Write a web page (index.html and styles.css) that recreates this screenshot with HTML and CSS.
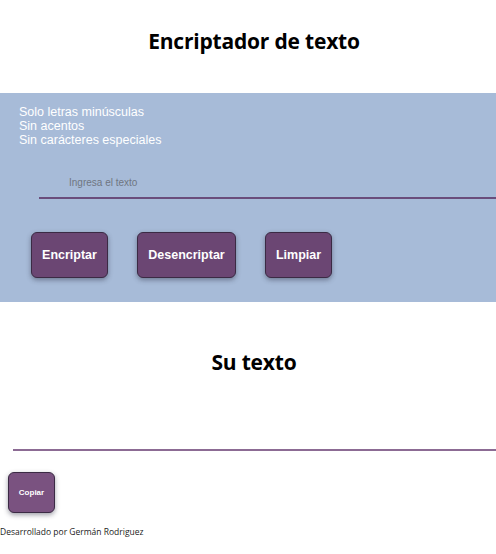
FILE: index.html
```html
<!DOCTYPE html>
<html lang="es">
<head>
<meta charset="utf-8">
<title>Encriptador de texto</title>
<link rel="stylesheet" href="styles.css">
</head>
<body>
<header class="top">
  <h1 class="title">Encriptador de texto</h1>
</header>
<section class="panel">
  <div class="rules">
    <div>Solo letras minúsculas</div>
    <div>Sin acentos</div>
    <div>Sin carácteres especiales</div>
  </div>
  <div class="field">
    <input class="input" type="text" placeholder="Ingresa el texto">
  </div>
  <div class="actions">
    <button class="btn">Encriptar</button>
    <button class="btn">Desencriptar</button>
    <button class="btn">Limpiar</button>
  </div>
</section>
<section class="result">
  <h2 class="subtitle">Su texto</h2>
  <div class="output"></div>
  <button class="btn-copy">Copiar</button>
</section>
<footer class="foot">Desarrollado por Germán Rodriguez</footer>
</body>
</html>
```
FILE: styles.css
```css
* { box-sizing: border-box; }
html, body { margin: 0; padding: 0; }
body {
  width: 496px;
  background: #ffffff;
  font-family: "Liberation Sans", Arial, sans-serif;
  overflow: hidden;
}
.top {
  height: 93px;
  display: flex;
  align-items: center;
  justify-content: center;
  padding-left: 12px;
  padding-bottom: 12px;
}
.title {
  margin: 0;
  font-family: "Open Sans", sans-serif;
  font-weight: 700;
  font-size: 21px;
  color: #000;
  letter-spacing: -0.2px;
}
.panel {
  background: #a7bbd8;
  height: 209px;
  padding-top: 12px;
}
.rules {
  padding-left: 19px;
  color: #ffffff;
  font-size: 12.5px;
  line-height: 14px;
}
.field {
  margin-top: 26px;
  padding-left: 39px;
}
.input {
  display: block;
  width: 100%;
  height: 26px;
  border: none;
  border-bottom: 2px solid #6a4d7c;
  background: transparent;
  padding: 0 0 5px 30px;
  font-family: "Liberation Sans", Arial, sans-serif;
  font-size: 10px;
  color: #333;
  outline: none;
}
.input::placeholder { color: #6f7682; }
.actions {
  display: flex;
  gap: 29px;
  padding-left: 31px;
  margin-top: 33px;
}
.btn {
  height: 46px;
  padding: 0 8px;
  background: #6b4673;
  color: #fff;
  border: 1px solid #3b2a44;
  border-radius: 6px;
  font-family: "Liberation Sans", Arial, sans-serif;
  font-weight: 700;
  font-size: 12.5px;
  box-shadow: 0 2px 5px rgba(40, 40, 60, 0.45);
}
.btn:first-child { width: 77px; }
.btn:nth-child(2) { width: 99px; }
.btn:nth-child(3) { width: 67px; }
.result {
  padding-top: 46px;
}
.subtitle {
  margin: 0;
  text-align: center;
  padding-left: 12px;
  font-family: "Open Sans", sans-serif;
  font-weight: 700;
  font-size: 21px;
  line-height: 28px;
  letter-spacing: -0.2px;
}
.output {
  margin-left: 13px;
  margin-top: 73px;
  height: 1px;
  border-bottom: 2px solid #8c6b94;
}
.btn-copy {
  display: block;
  margin: 21px 0 0 8px;
  width: 47px;
  height: 41px;
  background: #7a5280;
  color: #fff;
  border: 1px solid #3b2a44;
  border-radius: 6px;
  font-family: "Liberation Sans", Arial, sans-serif;
  font-weight: 700;
  font-size: 8px;
  padding: 0;
  box-shadow: 0 2px 5px rgba(40, 40, 60, 0.45);
}
.foot {
  margin-top: 13px;
  font-family: "Open Sans", sans-serif;
  font-size: 8.5px;
  color: #222;
}
```
